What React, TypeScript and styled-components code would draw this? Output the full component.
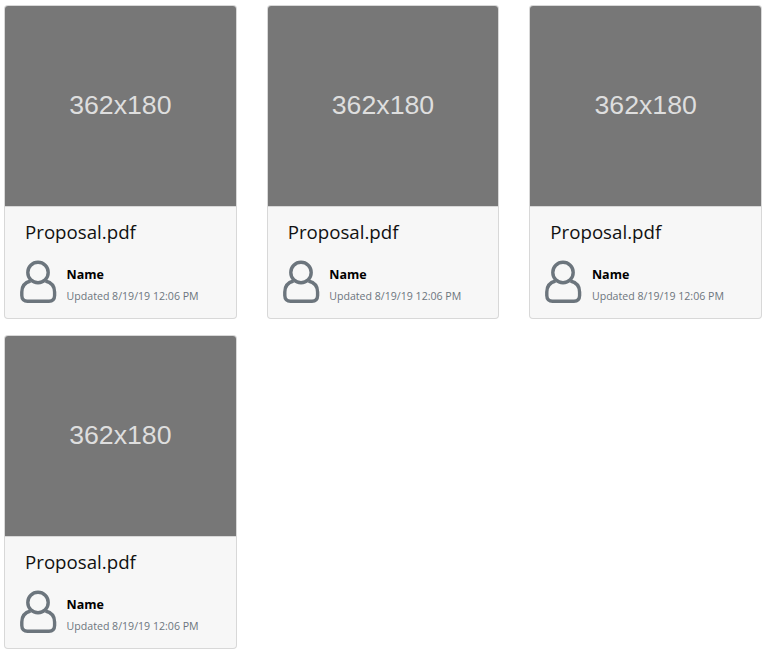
import React from 'react'
import styled, { createGlobalStyle } from 'styled-components'

const GlobalStyle = createGlobalStyle`
  html, body {
    margin: 0;
    padding: 0;
    background: #fff;
    font-family: "Open Sans", "Noto Sans", sans-serif;
  }
`

const Grid = styled.div`
  display: grid;
  grid-template-columns: repeat(3, 1fr);
  column-gap: 30px;
  row-gap: 16px;
  padding: 5px 5px 0 4px;
`

const Card = styled.div`
  display: flex;
  flex-direction: column;
  height: 314px;
  box-sizing: border-box;
  border: 1px solid rgba(0, 0, 0, 0.125);
  border-radius: 4px;
  overflow: hidden;
  background: #f7f7f7;
`

const Thumb = styled.div`
  height: 200px;
  box-sizing: border-box;
  padding-bottom: 2px;
  flex: none;
  display: flex;
  align-items: center;
  justify-content: center;
  background: #777;
  color: #dedede;
  font-family: "Liberation Sans", Arial, sans-serif;
  font-size: 26.7px;
`

const Footer = styled.div`
  flex: 1;
  border-top: 1px solid rgba(0, 0, 0, 0.125);
  padding: 12px 0 0 14px;
`

const FileName = styled.div`
  margin-left: 6px;
  font-size: 18.7px;
  line-height: 26px;
  color: #111;
`

const Owner = styled.div`
  display: flex;
  align-items: flex-start;
  gap: 7.6px;
  margin-top: 15px;
`

const Avatar = styled.svg`
  width: 40px;
  height: 44px;
  flex: none;
  fill: none;
  stroke: #6c757d;
  stroke-width: 3.4;
`

const OwnerInfo = styled.div`
  display: flex;
  flex-direction: column;
  padding-top: 6px;
`

const OwnerName = styled.span`
  font-size: 12.5px;
  font-weight: 700;
  line-height: 18px;
  color: #000;
`

const Updated = styled.span`
  margin-top: 5px;
  font-size: 10.6px;
  line-height: 15px;
  color: #6c757d;
`

const files = [1, 2, 3, 4]

const App: React.FC = () => {
  return (
    <>
      <GlobalStyle />
      <Grid>
        {files.map((id) => (
          <Card key={id}>
            <Thumb>362x180</Thumb>
            <Footer>
              <FileName>Proposal.pdf</FileName>
              <Owner>
                <Avatar viewBox="0 0 40 44">
                  <circle cx="19" cy="12.5" r="10.2" />
                  <path d="M11.5 21 C6 22.5 2.8 26.5 2.8 32 V35.5 C2.8 39 5 41.3 8.5 41.3 H30 C33.5 41.3 35.6 39 35.6 35.5 V32 C35.6 26.5 32.5 22.5 26.5 21" />
                </Avatar>
                <OwnerInfo>
                  <OwnerName>Name</OwnerName>
                  <Updated>Updated 8/19/19 12:06 PM</Updated>
                </OwnerInfo>
              </Owner>
            </Footer>
          </Card>
        ))}
      </Grid>
    </>
  )
}

export default App
